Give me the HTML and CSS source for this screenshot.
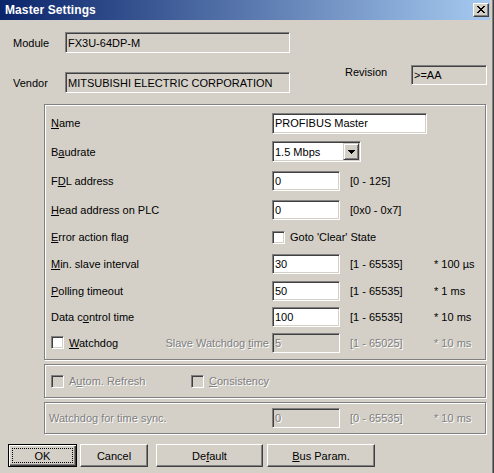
FILE: index.html
```html
<!DOCTYPE html>
<html>
<head>
<meta charset="utf-8">
<link rel="stylesheet" href="styles.css">
</head>
<body>
<div class="window">
  <div class="titlebar">
    <span class="title">Master Settings</span>
    <div class="close">
      <svg width="14" height="12" viewBox="1 1 14 12" shape-rendering="crispEdges"><path fill="#000" d="M4 3h2v1H4zM10 3h2v1h-2zM5 4h2v1H5zM9 4h2v1H9zM6 5h4v1H6zM7 6h2v1H7zM6 7h4v1H6zM5 8h2v1H5zM9 8h2v1H9zM4 9h2v1H4zM10 9h2v1h-2z"/></svg>
    </div>
  </div>

  <div class="top">
    <div class="topleft">
      <div class="trow"><span class="tlabel">Module</span><div class="edit ro wide">FX3U-64DP-M</div></div>
      <div class="trow"><span class="tlabel">Vendor</span><div class="edit ro wide">MITSUBISHI ELECTRIC CORPORATION</div></div>
    </div>
    <div class="rev">
      <span class="rev-label">Revision</span>
      <div class="edit ro rev-field">&gt;=AA</div>
    </div>
  </div>

  <div class="group main">
    <span><u>N</u>ame</span>
    <div class="span3"><div class="edit name">PROFIBUS Master</div></div>

    <span>B<u>a</u>udrate</span>
    <div class="span3">
      <div class="combo">
        <span class="combo-text">1.5 Mbps</span>
        <span class="drop"><svg width="7" height="4" viewBox="0 0 7 4" shape-rendering="crispEdges"><path fill="#000" d="M0 0h7v1H0zM1 1h5v1H1zM2 2h3v1H2zM3 3h1v1H3z"/></svg></span>
      </div>
    </div>

    <span>F<u>D</u>L address</span>
    <div><div class="edit num">0</div></div>
    <span>[0 - 125]</span>
    <span></span>

    <span><u>H</u>ead address on PLC</span>
    <div><div class="edit num">0</div></div>
    <span>[0x0 - 0x7]</span>
    <span></span>

    <span><u>E</u>rror action flag</span>
    <div class="span3 check"><span class="box"></span><span>Goto 'Clear' State</span></div>

    <span><u>M</u>in. slave interval</span>
    <div><div class="edit num">30</div></div>
    <span>[1 - 65535]</span>
    <span>* 100 µs</span>

    <span><u>P</u>olling timeout</span>
    <div><div class="edit num">50</div></div>
    <span>[1 - 65535]</span>
    <span>* 1 ms</span>

    <span>Data c<u>o</u>ntrol time</span>
    <div><div class="edit num">100</div></div>
    <span>[1 - 65535]</span>
    <span>* 10 ms</span>

    <div class="wdcell">
      <div class="check"><span class="box"></span><span><u>W</u>atchdog</span></div>
      <span class="dis">Slave Watchdog <u>t</u>ime</span>
    </div>
    <div><div class="edit num ro dis">5</div></div>
    <span class="dis">[1 - 65025]</span>
    <span class="dis">* 10 ms</span>
  </div>

  <div class="group opts">
    <div class="check first"><span class="box off"></span><span class="dis">A<u>u</u>tom. Refresh</span></div>
    <div class="check"><span class="box off"></span><span class="dis"><u>C</u>onsistency</span></div>
  </div>

  <div class="group sync">
    <span class="dis">Watchdog for time sync.</span>
    <div><div class="edit num ro dis">0</div></div>
    <span class="dis">[0 - 65535]</span>
    <span class="dis">* 10 ms</span>
  </div>

  <div class="buttons">
    <div class="btn ok"><span class="focus">OK</span></div>
    <div class="btn cancel">Cancel</div>
    <div class="btn def">De<u>f</u>ault</div>
    <div class="btn bus"><u>B</u>us Param.</div>
  </div>
</div>
</body>
</html>
```

FILE: styles.css
```css
html, body {
  margin: 0;
  padding: 0;
}
body {
  width: 494px;
  height: 473px;
  overflow: hidden;
  background: #d4d0c8;
  font-family: "Liberation Sans", Arial, sans-serif;
  font-size: 11px;
  color: #000;
}
.window {
  width: 494px;
  height: 473px;
  box-sizing: border-box;
  background: #d4d0c8;
  box-shadow: inset -1px 0 0 #404040, inset -2px 0 0 #808080;
}
.titlebar {
  width: 490px;
  height: 20px;
  box-sizing: border-box;
  padding: 0 1px 0 5px;
  display: flex;
  align-items: center;
  justify-content: space-between;
  background: linear-gradient(to right, #0a246a, #a6caf0);
}
.title {
  color: #fff;
  font-weight: bold;
  font-size: 12px;
  letter-spacing: 0.1px;
}
.close {
  width: 16px;
  height: 14px;
  box-sizing: border-box;
  background: #d4d0c8;
  border-top: 1px solid #fff;
  border-left: 1px solid #fff;
  border-right: 1px solid #404040;
  border-bottom: 1px solid #404040;
  box-shadow: inset -1px -1px 0 #808080;
  display: flex;
}
.edit {
  box-sizing: border-box;
  background: #fff;
  border-top: 1px solid #808080;
  border-left: 1px solid #808080;
  border-right: 1px solid #fff;
  border-bottom: 1px solid #fff;
  box-shadow: inset 1px 1px 0 #404040, inset -1px -1px 0 #d4d0c8;
  padding: 0 0 0 2px;
  display: flex;
  align-items: center;
  white-space: nowrap;
  overflow: hidden;
}
.edit.ro {
  background: #d4d0c8;
}
.top {
  display: flex;
  margin-top: 12px;
}
.topleft {
  padding-left: 13px;
  display: flex;
  flex-direction: column;
  gap: 19px;
}
.trow {
  display: flex;
  align-items: center;
}
.tlabel {
  width: 52px;
}
.edit.wide {
  width: 225px;
  height: 21px;
}
.rev {
  display: flex;
  align-items: flex-start;
  margin-left: 55px;
  margin-top: 33px;
}
.rev-label {
  width: 66px;
  line-height: 14px;
}
.rev-field {
  width: 76px;
  height: 20px;
}
.group {
  margin-left: 44px;
  width: 442px;
  box-sizing: border-box;
  border: 1px solid #808080;
  box-shadow: inset 1px 1px 0 #fff, 1px 1px 0 #fff;
}
.main {
  margin-top: 11px;
  padding: 4px 0 4px 6px;
  display: grid;
  grid-template-columns: 221px 78px 84px 1fr;
  grid-template-rows: 28px 29px 30px 28px 26px 27px 27px 26px 25px;
  align-items: center;
  white-space: nowrap;
}
.span3 {
  grid-column: span 3;
}
.edit.name {
  width: 155px;
  height: 21px;
}
.edit.num {
  width: 68px;
  height: 20px;
}
.combo {
  width: 89px;
  height: 21px;
  box-sizing: border-box;
  background: #fff;
  border-top: 1px solid #808080;
  border-left: 1px solid #808080;
  border-right: 1px solid #fff;
  border-bottom: 1px solid #fff;
  box-shadow: inset 1px 1px 0 #404040, inset -1px -1px 0 #d4d0c8;
  padding: 1px 1px 1px 2px;
  display: flex;
  align-items: center;
}
.combo-text {
  flex: 1;
}
.drop {
  width: 16px;
  height: 17px;
  box-sizing: border-box;
  background: #d4d0c8;
  border-top: 1px solid #d4d0c8;
  border-left: 1px solid #d4d0c8;
  border-right: 1px solid #404040;
  border-bottom: 1px solid #404040;
  box-shadow: inset 1px 1px 0 #fff, inset -1px -1px 0 #808080;
  display: flex;
  align-items: center;
  justify-content: center;
}
.check {
  display: flex;
  align-items: center;
  gap: 5px;
}
.box {
  width: 13px;
  height: 13px;
  box-sizing: border-box;
  background: #fff;
  border-top: 1px solid #808080;
  border-left: 1px solid #808080;
  border-right: 1px solid #fff;
  border-bottom: 1px solid #fff;
  box-shadow: inset 1px 1px 0 #404040, inset -1px -1px 0 #d4d0c8;
}
.box.off {
  background: #d4d0c8;
}
.dis {
  color: #808080;
  text-shadow: 1px 1px 0 #fff;
}
.wdcell {
  display: flex;
  align-items: center;
  justify-content: space-between;
  padding-right: 3px;
}
.opts {
  margin-top: 4px;
  height: 34px;
  padding-left: 6px;
  display: flex;
  align-items: center;
}
.opts .first {
  width: 140px;
}
.sync {
  margin-top: 4px;
  height: 32px;
  padding-left: 4px;
  display: grid;
  grid-template-columns: 223px 78px 84px 1fr;
  align-items: center;
}
.buttons {
  margin-top: 10px;
  margin-left: 8px;
  display: flex;
}
.btn {
  height: 23px;
  box-sizing: border-box;
  border-top: 1px solid #fff;
  border-left: 1px solid #fff;
  border-right: 1px solid #404040;
  border-bottom: 1px solid #404040;
  box-shadow: inset -1px -1px 0 #808080;
  display: flex;
  align-items: center;
  justify-content: center;
}
.btn.ok {
  width: 69px;
  border: 1px solid #000;
  box-shadow: inset 1px 1px 0 #fff, inset -1px -1px 0 #404040, inset -2px -2px 0 #808080;
  padding: 3px;
}
.focus {
  flex: 1;
  align-self: stretch;
  border: 1px dotted #000;
  display: flex;
  align-items: center;
  justify-content: center;
}
.btn.cancel {
  width: 68px;
  margin-left: 3px;
}
.btn.def {
  width: 107px;
  margin-left: 8px;
}
.btn.bus {
  width: 108px;
  margin-left: 4px;
}
```
